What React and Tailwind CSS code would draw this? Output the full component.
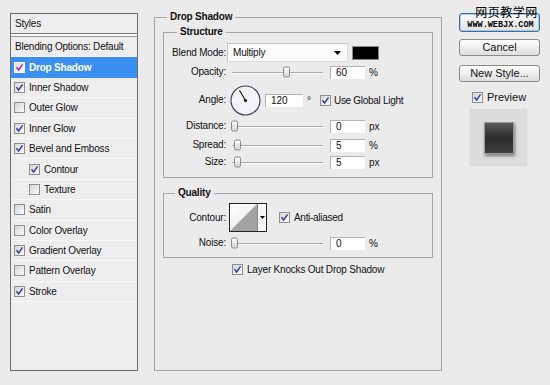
import React from "react";

function Check({ checked, hl }) {
  return (
    <span
      className={
        hl
          ? "w-[11px] h-[11px] border border-white bg-gradient-to-br from-[#d8d8e8] to-[#ffffff] flex items-center justify-center shrink-0"
          : "w-[11px] h-[11px] border border-[#8e8f8f] bg-gradient-to-br from-[#d6d6d6] to-[#fbfbfb] flex items-center justify-center shrink-0"
      }
    >
      {checked && (
        <svg width="9" height="9" viewBox="0 0 9 9">
          <path
            d="M1.5 4.3 L3.6 7 L7.6 1.4"
            fill="none"
            stroke={hl ? "#a0289c" : "#3b3b9e"}
            strokeWidth="1.5"
          />
        </svg>
      )}
    </span>
  );
}

function Slider({ left }) {
  return (
    <div className="relative w-[91px] h-full ml-[6px] shrink-0">
      <div className="absolute left-0 right-0 top-1/2 h-[2px] border-t border-[#a9a9a9] bg-white" />
      <div
        className="absolute top-1/2 -translate-y-1/2 w-[7px] h-[11px] rounded-[2px] border border-[#8a8a8a] bg-gradient-to-b from-white to-[#d2d2d2]"
        style={{ left }}
      />
    </div>
  );
}

function Field({ value, w = "w-[35px]", ml = "ml-[7px]" }) {
  const cls =
    w === "w-[38px]"
      ? "w-[38px] h-[13px] bg-white border-t border-l border-[#b4b4b4] text-[10px] leading-[12px] pl-[5px] shrink-0"
      : "w-[35px] h-[13px] bg-white border-t border-l border-[#b4b4b4] text-[10px] leading-[12px] pl-[5px] shrink-0";
  return (
    <div className={ml === "ml-[4px]" ? "ml-[4px] " + cls : "ml-[7px] " + cls}>
      {value}
    </div>
  );
}

function Label({ children }) {
  return (
    <div className="w-[62px] shrink-0 text-right text-[10px] tracking-[-0.2px] leading-[12px]">
      {children}
    </div>
  );
}

const rows = [
  ["Drop Shadow", true, false, true],
  ["Inner Shadow", true, false],
  ["Outer Glow", false, false],
  ["Inner Glow", true, false],
  ["Bevel and Emboss", true, false],
  ["Contour", true, true],
  ["Texture", false, true],
  ["Satin", false, false],
  ["Color Overlay", false, false],
  ["Gradient Overlay", true, false],
  ["Pattern Overlay", false, false],
  ["Stroke", true, false],
];

export default function App() {
  return (
    <div className="w-[550px] h-[385px] bg-[#ebebeb] flex items-start font-['Liberation_Sans',Arial,sans-serif] text-[#111] relative overflow-hidden">
      {/* Left styles list */}
      <div className="ml-[10px] mt-[13px] w-[128px] h-[358px] border border-[#6e6e6e] bg-[#eeeeee] flex flex-col">
        <div className="h-[20px] border-b border-[#7a7a7a] flex items-center pl-[4px] text-[10px] tracking-[-0.2px]">
          Styles
        </div>
        <div className="h-[2px] bg-[#f8f8f8] border-b border-[#9a9a9a] box-content" />
        <div className="h-[20.4px] flex items-center pl-[4px] text-[10px] tracking-[-0.2px] border-b border-[#f8f8f8]">
          Blending Options: Default
        </div>
        {rows.map(([name, checked, indent, hl]) => (
          <div
            key={name}
            className={
              (hl
                ? "bg-[#3a8ff0] text-white font-bold "
                : "border-b border-[#f8f8f8] ") +
              (indent ? "pl-[18px] " : "pl-[3px] ") +
              "h-[20.4px] flex items-center gap-[4px] text-[10px] tracking-[-0.2px]"
            }
          >
            <Check checked={checked} hl={hl} />
            <span>{name}</span>
          </div>
        ))}
      </div>

      {/* Main group */}
      <fieldset className="ml-[16px] mt-[10px] w-[288px] h-[361px] border border-[#a6a6a6] p-0 m-0 min-w-0">
        <legend className="ml-[12px] px-[3px] text-[10px] font-bold tracking-[-0.2px] leading-[14px]">
          Drop Shadow
        </legend>
        <div className="px-[8px] flex flex-col">
          {/* Structure */}
          <fieldset className="mt-[1px] h-[153px] border border-[#a6a6a6] p-0 m-0 min-w-0">
            <legend className="ml-[13px] px-[3px] text-[10px] font-bold tracking-[-0.2px] leading-[14px]">
              Structure
            </legend>
            <div className="flex flex-col">
              <div className="mt-[4px] h-[19px] flex items-center">
                <Label>Blend Mode:</Label>
                <div className="ml-[1px] w-[121px] h-[19px] bg-[#fbfbfb] border border-[#dcdcdc] border-t-[#c4c4c4] border-l-[#c4c4c4] flex items-center justify-between pl-[5px] pr-[6px] text-[10px] tracking-[-0.2px]">
                  <span>Multiply</span>
                  <svg width="7" height="4" viewBox="0 0 7 4">
                    <path d="M0 0 H7 L3.5 4 Z" fill="#000" />
                  </svg>
                </div>
                <div className="ml-[4px] w-[27px] h-[14px] bg-black border border-[#8a8a8a]" />
              </div>
              <div className="mt-[3px] h-[14px] flex items-center">
                <Label>Opacity:</Label>
                <Slider left={51} />
                <Field value="60" />
                <span className="ml-[4px] text-[10px]">%</span>
              </div>
              <div className="mt-[6px] h-[30px] flex items-center">
                <Label>Angle:</Label>
                <svg className="ml-[4px] shrink-0" width="31" height="31" viewBox="0 0 31 31">
                  <circle cx="15.5" cy="15.5" r="14.5" fill="#f4f4f6" stroke="#3f4160" strokeWidth="1.2" />
                  <line x1="15.5" y1="15.5" x2="9.5" y2="5.2" stroke="#111" strokeWidth="1.1" />
                  <circle cx="15.5" cy="15.5" r="1.6" fill="#111" />
                </svg>
                <Field value="120" w="w-[38px]" ml="ml-[4px]" />
                <span className="ml-[4px] text-[10px] self-start mt-[8px]">°</span>
                <div className="ml-[9px] flex items-center gap-[3px]">
                  <Check checked />
                  <span className="text-[10px] tracking-[-0.3px]">Use Global Light</span>
                </div>
              </div>
              <div className="mt-[5px] h-[12px] flex items-center">
                <Label>Distance:</Label>
                <Slider left={-1} />
                <Field value="0" />
                <span className="ml-[4px] text-[10px]">px</span>
              </div>
              <div className="mt-[7px] h-[12px] flex items-center">
                <Label>Spread:</Label>
                <Slider left={2} />
                <Field value="5" />
                <span className="ml-[4px] text-[10px]">%</span>
              </div>
              <div className="mt-[5px] h-[12px] flex items-center">
                <Label>Size:</Label>
                <Slider left={2} />
                <Field value="5" />
                <span className="ml-[4px] text-[10px]">px</span>
              </div>
            </div>
          </fieldset>

          {/* Quality */}
          <fieldset className="mt-[8px] h-[72px] border border-[#a6a6a6] p-0 m-0 min-w-0">
            <legend className="ml-[11px] px-[3px] text-[10px] font-bold tracking-[-0.2px] leading-[14px]">
              Quality
            </legend>
            <div className="flex flex-col">
              <div className="mt-[3px] h-[29px] flex items-center">
                <Label>Contour:</Label>
                <div className="ml-[3px] w-[38px] h-[29px] border border-[#222] flex bg-white">
                  <svg width="27" height="27" viewBox="0 0 27 27" className="shrink-0">
                    <defs>
                      <linearGradient id="cg" x1="0" y1="0" x2="1" y2="1">
                        <stop offset="0" stopColor="#ffffff" />
                        <stop offset="1" stopColor="#e6e6e6" />
                      </linearGradient>
                    </defs>
                    <rect width="27" height="27" fill="url(#cg)" />
                    <path d="M0 27 L27 0 L27 27 Z" fill="#a3a3a3" />
                  </svg>
                  <div className="flex-1 border-l border-[#888] bg-[#f6f6f6] flex items-center justify-center">
                    <svg width="5" height="3" viewBox="0 0 5 3">
                      <path d="M0 0 H5 L2.5 3 Z" fill="#000" />
                    </svg>
                  </div>
                </div>
                <div className="ml-[12px] flex items-center gap-[4px]">
                  <Check checked />
                  <span className="text-[10px] tracking-[-0.3px]">Anti-aliased</span>
                </div>
              </div>
              <div className="mt-[5px] h-[12px] flex items-center">
                <Label>Noise:</Label>
                <Slider left={-1} />
                <Field value="0" />
                <span className="ml-[4px] text-[10px]">%</span>
              </div>
            </div>
          </fieldset>

          <div className="mt-[6px] h-[11px] ml-[69px] flex items-center gap-[4px]">
            <Check checked />
            <span className="text-[10px] tracking-[-0.2px]">Layer Knocks Out Drop Shadow</span>
          </div>
        </div>
      </fieldset>

      {/* Right column */}
      <div className="ml-[17px] mt-[13px] w-[81px] flex flex-col">
        <div className="relative h-[19px] rounded-[3px] border border-[#3d6f9e] bg-gradient-to-b from-white to-[#e2e2e2] shadow-[inset_0_0_0_1px_#a9c6e4]">
          <div className="absolute -top-[9px] left-0 right-0 flex flex-col items-center text-black">
            <span className="font-['Noto_Sans_CJK_SC',sans-serif] text-[12px] leading-[14px] tracking-[0.5px] pl-[14px]">
              网页教学网
            </span>
            <span className="font-['Liberation_Mono',monospace] font-bold text-[8.5px] leading-[10px] mt-[1px] pl-[2px]">
              WWW.WEBJX.COM
            </span>
          </div>
        </div>
        <div className="mt-[7px] h-[17px] rounded-[3px] border border-[#8a8a8a] bg-gradient-to-b from-white to-[#dedede] flex items-center justify-center text-[11px]">
          Cancel
        </div>
        <div className="mt-[9px] h-[17px] rounded-[3px] border border-[#8a8a8a] bg-gradient-to-b from-white to-[#dedede] flex items-center justify-center text-[11px]">
          New Style...
        </div>
        <div className="mt-[10px] ml-[13px] h-[11px] flex items-center gap-[4px]">
          <Check checked />
          <span className="text-[11px]">Preview</span>
        </div>
        <div className="mt-[5px] ml-[10px] w-[59px] h-[59px] bg-[#dcdcdc] border border-[#e6e6e6] flex items-center justify-center">
          <div className="w-[30px] h-[32px] border border-[#9a9a9a] bg-gradient-to-b from-[#5a5a5a] via-[#2c2c2c] to-[#3c3c3c] shadow-[1px_2px_3px_rgba(0,0,0,0.45)]" />
        </div>
      </div>
    </div>
  );
}
